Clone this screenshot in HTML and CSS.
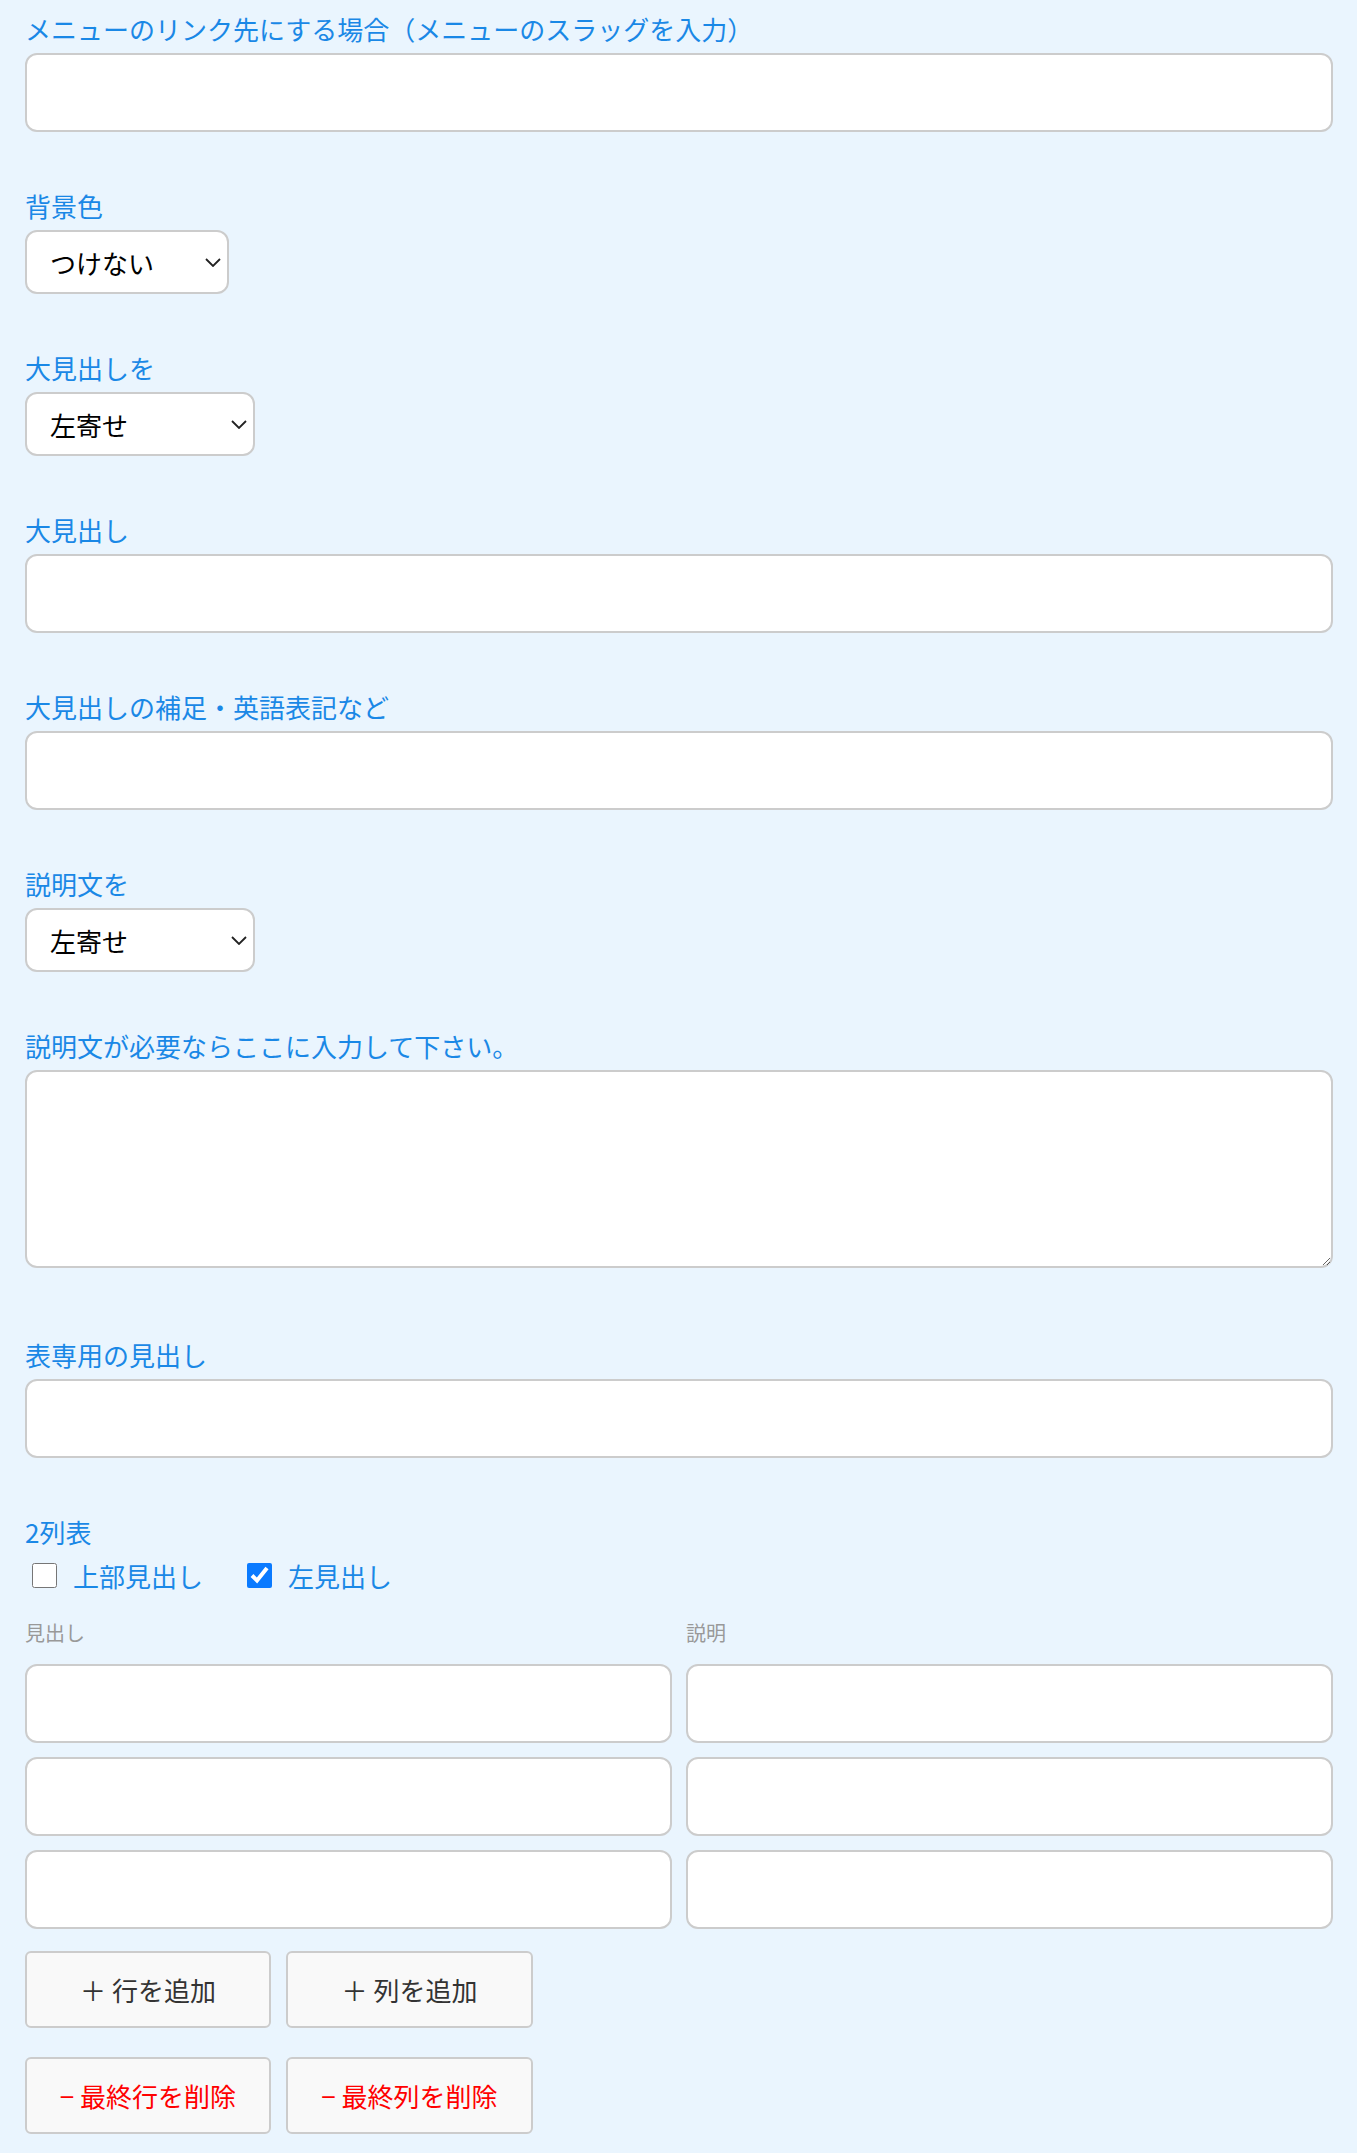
FILE: index.html
```html
<!DOCTYPE html>
<html lang="ja">
<head>
<meta charset="utf-8">
<title>フォーム</title>
<link rel="stylesheet" href="styles.css">
</head>
<body>
<form class="form">
  <div class="field">
    <label class="field-label">メニューのリンク先にする場合（メニューのスラッグを入力）</label>
    <input class="text-input" type="text">
  </div>

  <div class="field">
    <label class="field-label">背景色</label>
    <div class="select-wrap select-wrap--bg">
      <select class="select"><option>つけない</option></select>
      <svg class="select-arrow" viewBox="0 0 16 9" width="16" height="9"><path d="M1 1 L8 8 L15 1" fill="none" stroke="#222" stroke-width="1.8"/></svg>
    </div>
  </div>

  <div class="field">
    <label class="field-label">大見出しを</label>
    <div class="select-wrap select-wrap--align">
      <select class="select"><option>左寄せ</option></select>
      <svg class="select-arrow" viewBox="0 0 16 9" width="16" height="9"><path d="M1 1 L8 8 L15 1" fill="none" stroke="#222" stroke-width="1.8"/></svg>
    </div>
  </div>

  <div class="field">
    <label class="field-label">大見出し</label>
    <input class="text-input" type="text">
  </div>

  <div class="field">
    <label class="field-label">大見出しの補足・英語表記など</label>
    <input class="text-input" type="text">
  </div>

  <div class="field">
    <label class="field-label">説明文を</label>
    <div class="select-wrap select-wrap--align">
      <select class="select"><option>左寄せ</option></select>
      <svg class="select-arrow" viewBox="0 0 16 9" width="16" height="9"><path d="M1 1 L8 8 L15 1" fill="none" stroke="#222" stroke-width="1.8"/></svg>
    </div>
  </div>

  <div class="field field--textarea">
    <label class="field-label">説明文が必要ならここに入力して下さい。</label>
    <textarea class="textarea"></textarea>
  </div>

  <div class="field">
    <label class="field-label">表専用の見出し</label>
    <input class="text-input" type="text">
  </div>

  <div class="table-field">
    <div class="field-label">2列表</div>
    <div class="check-row">
      <label class="check"><input type="checkbox" class="check-box">上部見出し</label>
      <label class="check"><input type="checkbox" class="check-box" checked>左見出し</label>
    </div>
    <div class="grid col-heads">
      <div class="col-head">見出し</div>
      <div class="col-head">説明</div>
    </div>
    <div class="grid rows">
      <input class="text-input" type="text">
      <input class="text-input" type="text">
      <input class="text-input" type="text">
      <input class="text-input" type="text">
      <input class="text-input" type="text">
      <input class="text-input" type="text">
    </div>
    <div class="buttons">
      <button type="button" class="btn">＋ 行を追加</button>
      <button type="button" class="btn">＋ 列を追加</button>
      <button type="button" class="btn btn--danger">− 最終行を削除</button>
      <button type="button" class="btn btn--danger">− 最終列を削除</button>
    </div>
  </div>
</form>
</body>
</html>
```

FILE: styles.css
```css
html, body {
  margin: 0;
}
body {
  background: #eaf5fe;
  padding: 12px 24px 20px 25px;
  font-family: "Noto Sans CJK JP", "Noto Sans", sans-serif;
  font-size: 26px;
  color: #000;
}
.form {
  display: flex;
  flex-direction: column;
}
.field {
  display: flex;
  flex-direction: column;
  align-items: flex-start;
  margin-bottom: 57px;
}
.field--textarea {
  margin-bottom: 70px;
}
.field-label {
  display: block;
  font-size: 26px;
  line-height: 33px;
  height: 36px;
  color: #1a88e6;
  margin-bottom: 5px;
  white-space: nowrap;
}
.text-input {
  box-sizing: border-box;
  display: block;
  width: 100%;
  height: 79px;
  margin: 0;
  background: #fff;
  border: 2px solid #cccccc;
  border-radius: 12px;
  padding: 0 20px;
  font: inherit;
  outline: none;
}
.field > .text-input {
  align-self: stretch;
}
.select-wrap {
  position: relative;
  height: 64px;
}
.select-wrap--bg { width: 204px; }
.select-wrap--align { width: 230px; }
.select {
  -webkit-appearance: none;
  appearance: none;
  box-sizing: border-box;
  width: 100%;
  height: 64px;
  margin: 0;
  background: #fff;
  border: 2px solid #cccccc;
  border-radius: 12px;
  padding: 0 40px 0 23px;
  font-family: "Noto Sans CJK JP", sans-serif;
  font-size: 26px;
  color: #000;
  outline: none;
}
.select-arrow {
  position: absolute;
  right: 8px;
  top: 28px;
  pointer-events: none;
}
.textarea {
  box-sizing: border-box;
  display: block;
  align-self: stretch;
  width: 100%;
  height: 198px;
  margin: 0;
  background: #fff;
  border: 2px solid #cccccc;
  border-radius: 12px;
  padding: 12px 20px;
  font: inherit;
  outline: none;
  resize: vertical;
}
.table-field {
  display: flex;
  flex-direction: column;
}
.check-row {
  display: flex;
  align-items: center;
  height: 36px;
  margin-top: 1px;
  gap: 37px;
}
.check {
  display: inline-flex;
  align-items: center;
  color: #1a88e6;
  font-size: 26px;
  line-height: 33px;
}
.check-box {
  width: 25px;
  height: 25px;
  margin: 0 16px 0 7px;
  accent-color: #0a7aff;
}
.grid {
  display: grid;
  grid-template-columns: 1fr 1fr;
  column-gap: 14px;
}
.col-heads {
  margin-top: 25px;
}
.col-head {
  font-size: 20px;
  line-height: 30px;
  color: #999999;
}
.rows {
  margin-top: 16px;
  row-gap: 14px;
}
.buttons {
  display: grid;
  grid-template-columns: 246px 247px;
  column-gap: 15px;
  row-gap: 29px;
  margin-top: 22px;
}
.btn {
  box-sizing: border-box;
  height: 77px;
  margin: 0;
  background: #f9f9f9;
  border: 2px solid #cccccc;
  border-radius: 6px;
  font-family: "Noto Sans CJK JP", sans-serif;
  font-size: 26px;
  color: #333333;
  padding: 0;
  cursor: pointer;
}
.btn--danger {
  color: #ff0000;
}
```
